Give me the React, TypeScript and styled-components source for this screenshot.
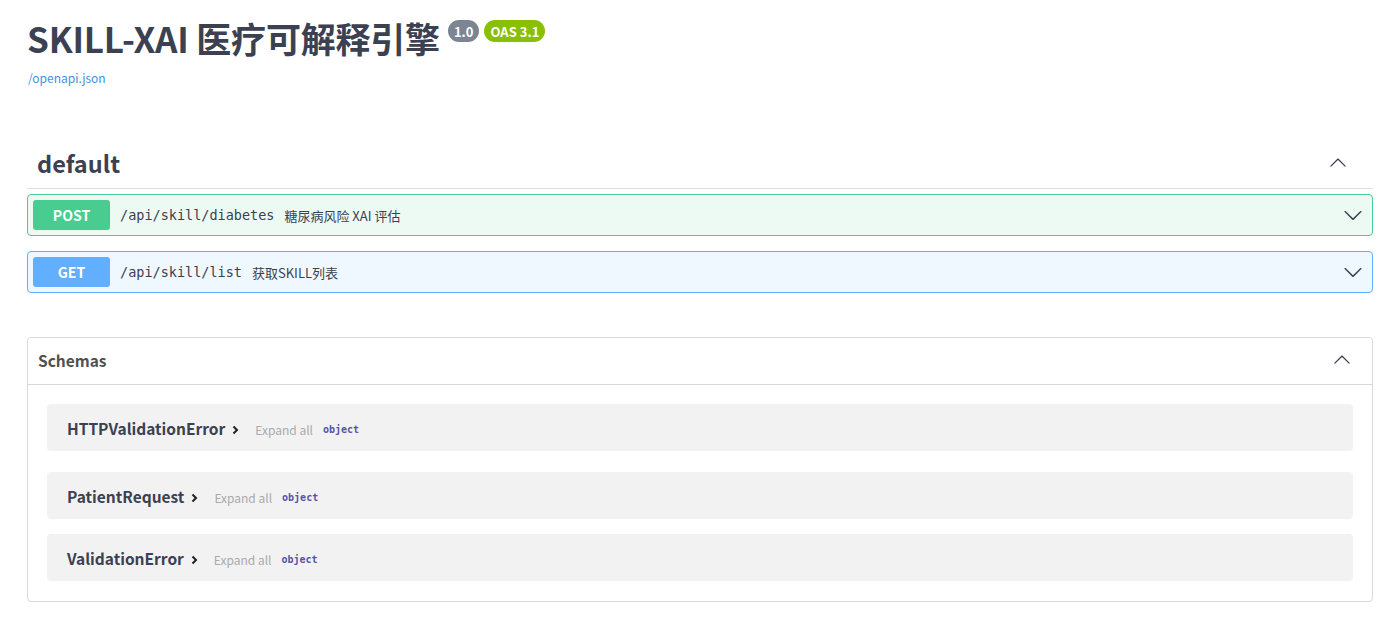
import styled, { createGlobalStyle } from 'styled-components';

const GlobalStyle = createGlobalStyle`
  html, body {
    margin: 0;
    padding: 0;
    background: #fff;
  }
  body {
    font-family: 'Noto Sans CJK SC', 'Noto Sans', sans-serif;
    color: #3b4151;
  }
`;

const Page = styled.div`
  padding: 12px 27px 0;
`;

const Info = styled.div`
  margin-bottom: 54px;
`;

const TitleRow = styled.div`
  display: flex;
  align-items: flex-start;
  gap: 5px;
`;

const Title = styled.h2`
  margin: 0 3px 0 0;
  font-size: 35px;
  line-height: 52px;
  font-weight: 700;
  color: #3b4151;
  letter-spacing: -0.2px;
`;

const Stamp = styled.span<{ $bg: string }>`
  margin-top: 8px;
  display: inline-flex;
  align-items: center;
  height: 22px;
  padding: 0 6px;
  border-radius: 57px;
  background: ${(p) => p.$bg};
  color: #fff;
  font-size: 13px;
  font-weight: 700;
`;

const SpecLink = styled.a`
  display: inline-block;
  margin-top: 2px;
  margin-left: 1px;
  font-size: 12px;
  color: #4990e2;
  text-decoration: none;
`;

const TagHeader = styled.div`
  display: flex;
  align-items: center;
  justify-content: space-between;
  height: 47px;
  padding: 0 26px 4px 10px;
  box-sizing: border-box;
  border-bottom: 1px solid #dcdee2;
`;

const TagName = styled.h3`
  margin: 0;
  font-size: 23.5px;
  font-weight: 700;
  color: #3b4151;
`;

const Ops = styled.div`
  display: flex;
  flex-direction: column;
  gap: 15px;
  padding-top: 5px;
  margin-bottom: 44px;
`;

const methodColors: Record<string, string> = {
  POST: '#49cc90',
  GET: '#61affe',
};

const methodBgs: Record<string, string> = {
  POST: '#edfaf4',
  GET: '#eff7ff',
};

const OpRow = styled.div<{ $method: string }>`
  display: flex;
  align-items: center;
  height: 42px;
  box-sizing: border-box;
  padding: 0 5px;
  border: 1px solid ${(p) => methodColors[p.$method]};
  border-radius: 4px;
  background: ${(p) => methodBgs[p.$method]};
`;

const MethodBadge = styled.span<{ $method: string }>`
  display: flex;
  align-items: center;
  justify-content: center;
  width: 77px;
  height: 30px;
  border-radius: 3px;
  background: ${(p) => methodColors[p.$method]};
  color: #fff;
  font-size: 14px;
  font-weight: 700;
`;

const OpPath = styled.span`
  margin-left: 10px;
  font-family: 'DejaVu Sans Mono', 'Liberation Mono', monospace;
  font-size: 13.5px;
  color: #3b4151;
`;

const OpSummary = styled.span`
  margin-left: 10px;
  flex: 1;
  font-size: 13px;
  color: #3b4151;
`;

const Arrow = styled.svg<{ $up?: boolean; $size: number }>`
  width: ${(p) => p.$size}px;
  height: ${(p) => p.$size}px;
  flex: none;
  transform: ${(p) => (p.$up ? 'rotate(180deg)' : 'none')};
`;

const Chevron = ({ up, size = 20 }: { up?: boolean; size?: number }) => (
  <Arrow $up={up} $size={size} viewBox='0 0 20 20'>
    <path
      fill='#3b4151'
      d='M17.418 6.109c.272-.268.709-.268.979 0s.271.701 0 .969l-7.908 7.83c-.27.268-.707.268-.979 0l-7.908-7.83c-.27-.268-.27-.701 0-.969.271-.268.709-.268.979 0L10 13.25l7.418-7.141z'
    />
  </Arrow>
);

const OpArrowBox = styled.span`
  display: flex;
  padding-right: 4px;
`;

const Models = styled.section`
  border: 1px solid #d7d9dd;
  border-radius: 4px;
  padding-bottom: 20px;
`;

const ModelsHeader = styled.div`
  display: flex;
  align-items: center;
  justify-content: space-between;
  height: 47px;
  box-sizing: border-box;
  padding: 0 21px 2px 10px;
  border-bottom: 1px solid #d7d9dd;
  margin-bottom: 19px;
`;

const ModelsTitle = styled.h4`
  margin: 0;
  font-size: 15.5px;
  font-weight: 700;
  color: #505050;
`;

const ModelList = styled.div`
  display: flex;
  flex-direction: column;
`;

const ModelBox = styled.div`
  display: flex;
  align-items: center;
  height: 47px;
  margin: 0 19px 15px;
  padding: 0 20px;
  border-radius: 4px;
  background: #f2f2f2;

  &:first-child {
    margin-bottom: 21px;
  }
  &:last-child {
    margin-bottom: 0;
  }
`;

const ModelName = styled.span`
  font-size: 15.5px;
  font-weight: 700;
  color: #3b4151;
`;

const Toggle = styled.svg`
  width: 7px;
  height: 10px;
  margin-left: 7px;
  margin-top: 5px;
`;

const ExpandAll = styled.span`
  margin-left: 16px;
  margin-top: 3px;
  font-size: 12px;
  color: #aaa;
`;

const TypeName = styled.span`
  margin-left: 10px;
  margin-top: 3px;
  font-family: 'DejaVu Sans Mono', 'Liberation Mono', monospace;
  font-size: 10px;
  font-weight: 700;
  color: #55a;
`;

const ops = [
  { method: 'POST', path: '/api/skill/diabetes', summary: '糖尿病风险 XAI 评估' },
  { method: 'GET', path: '/api/skill/list', summary: '获取SKILL列表' },
];

const schemas = ['HTTPValidationError', 'PatientRequest', 'ValidationError'];

export default function App() {
  return (
    <>
      <GlobalStyle />
      <Page>
        <Info>
          <TitleRow>
            <Title>SKILL-XAI 医疗可解释引擎</Title>
            <Stamp $bg='#7d8492'>1.0</Stamp>
            <Stamp $bg='#89bf04'>OAS 3.1</Stamp>
          </TitleRow>
          <SpecLink href='#'>/openapi.json</SpecLink>
        </Info>

        <TagHeader>
          <TagName>default</TagName>
          <Chevron up size={18} />
        </TagHeader>
        <Ops>
          {ops.map((op) => (
            <OpRow key={op.path} $method={op.method}>
              <MethodBadge $method={op.method}>{op.method}</MethodBadge>
              <OpPath>{op.path}</OpPath>
              <OpSummary>{op.summary}</OpSummary>
              <OpArrowBox>
                <Chevron />
              </OpArrowBox>
            </OpRow>
          ))}
        </Ops>

        <Models>
          <ModelsHeader>
            <ModelsTitle>Schemas</ModelsTitle>
            <Chevron up size={18} />
          </ModelsHeader>
          <ModelList>
            {schemas.map((name) => (
              <ModelBox key={name}>
                <ModelName>{name}</ModelName>
                <Toggle viewBox='0 0 7 10'>
                  <path
                    d='M1.5 1.5 L5 5 L1.5 8.5'
                    fill='none'
                    stroke='#222'
                    strokeWidth='2'
                  />
                </Toggle>
                <ExpandAll>Expand all</ExpandAll>
                <TypeName>object</TypeName>
              </ModelBox>
            ))}
          </ModelList>
        </Models>
      </Page>
    </>
  );
}
